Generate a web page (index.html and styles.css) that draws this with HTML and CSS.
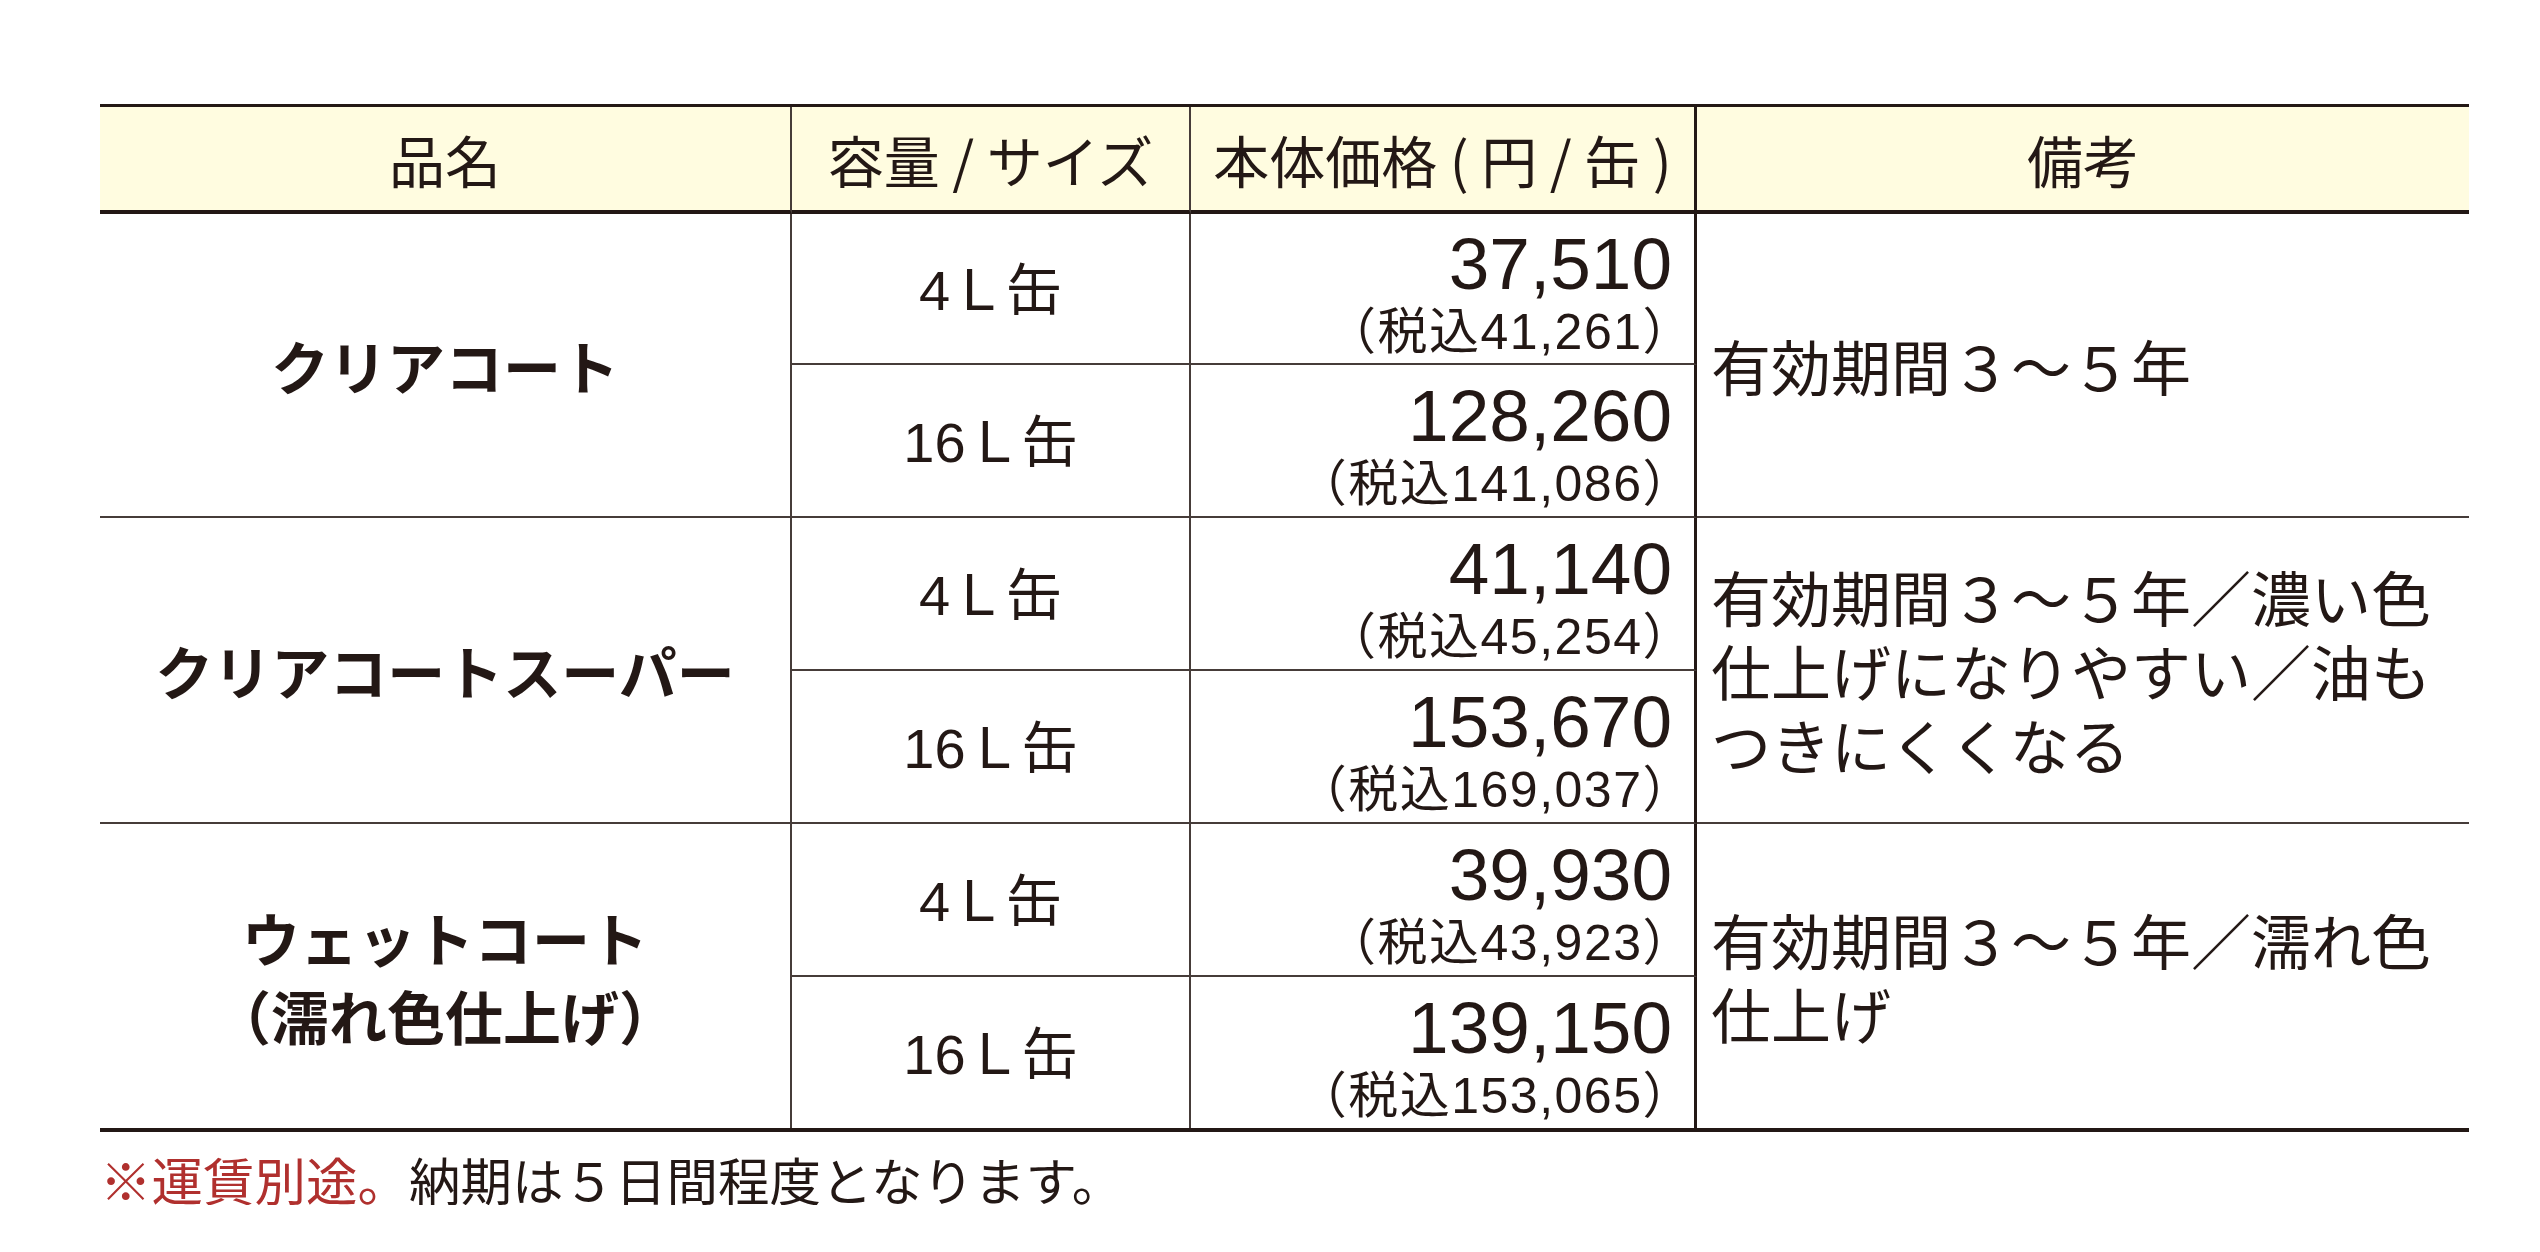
FILE: index.html
```html
<!DOCTYPE html>
<html lang="ja">
<head>
<meta charset="utf-8">
<title>価格表</title>
<link rel="stylesheet" href="styles.css">
</head>
<body>
<div class="page">
  <table class="price-table">
    <colgroup>
      <col class="col-name">
      <col class="col-size">
      <col class="col-price">
      <col class="col-note">
    </colgroup>
    <thead>
      <tr class="head-row">
        <th class="b-thin">品名</th>
        <th class="b-thin">容量 / サイズ</th>
        <th class="b-thick">本体価格 ( 円 / 缶 )</th>
        <th>備考</th>
      </tr>
    </thead>
    <tbody>
      <tr class="row first">
        <td class="name b-thin" rowspan="2">クリアコート</td>
        <td class="size b-thin">4<span class="jp">Ｌ缶</span></td>
        <td class="price b-thick"><div class="num">37,510</div><div class="tax">（税込41,261）</div></td>
        <td class="note" rowspan="2"><div class="line">有効期間３～５年</div></td>
      </tr>
      <tr class="row">
        <td class="size b-thin">16<span class="jp">Ｌ缶</span></td>
        <td class="price b-thick"><div class="num">128,260</div><div class="tax">（税込141,086）</div></td>
      </tr>
      <tr class="row">
        <td class="name b-thin" rowspan="2">クリアコートスーパー</td>
        <td class="size b-thin">4<span class="jp">Ｌ缶</span></td>
        <td class="price b-thick"><div class="num">41,140</div><div class="tax">（税込45,254）</div></td>
        <td class="note" rowspan="2"><div class="line">有効期間３～５年／濃い色</div><div class="line">仕上げになりやすい／油も</div><div class="line">つきにくくなる</div></td>
      </tr>
      <tr class="row">
        <td class="size b-thin">16<span class="jp">Ｌ缶</span></td>
        <td class="price b-thick"><div class="num">153,670</div><div class="tax">（税込169,037）</div></td>
      </tr>
      <tr class="row">
        <td class="name b-thin end" rowspan="2"><div class="line">ウェットコート</div><div class="line">（濡れ色仕上げ）</div></td>
        <td class="size b-thin">4<span class="jp">Ｌ缶</span></td>
        <td class="price b-thick"><div class="num">39,930</div><div class="tax">（税込43,923）</div></td>
        <td class="note end" rowspan="2"><div class="line">有効期間３～５年／濡れ色</div><div class="line">仕上げ</div></td>
      </tr>
      <tr class="row last">
        <td class="size b-thin end">16<span class="jp">Ｌ缶</span></td>
        <td class="price b-thick end"><div class="num">139,150</div><div class="tax">（税込153,065）</div></td>
      </tr>
    </tbody>
  </table>
  <p class="footnote"><span class="red">※運賃別途。</span>納期は５日間程度となります。</p>
</div>
</body>
</html>
```

FILE: styles.css
```css
html, body {
  margin: 0;
  padding: 0;
  background: #ffffff;
}

body {
  color: #231815;
  font-family: "Noto Sans CJK JP", "Noto Sans", sans-serif;
}

.page {
  padding: 104px 0 0 100px;
}

.price-table {
  table-layout: fixed;
  width: 2369px;
  border-collapse: separate;
  border-spacing: 0;
  border-top: 3px solid #231815;
  border-bottom: 4px solid #231815;
}

.col-name { width: 692px; }
.col-size { width: 399px; }
.col-price { width: 506px; }
.col-note { width: 772px; }

.head-row {
  height: 107px;
}

.head-row th {
  background: #fffce0;
  border-bottom: 4px solid #231815;
  font-size: 56px;
  font-weight: 400;
  text-align: center;
  vertical-align: middle;
  padding: 0;
  line-height: 1;
  white-space: nowrap;
}

.b-thin {
  border-right: 2px solid #463c39;
}

.b-thick {
  border-right: 3px solid #231815;
}

.row {
  height: 153px;
}

.row.first {
  height: 151px;
}

.row.last {
  height: 151px;
}

.row td {
  border-bottom: 2px solid #463c39;
  padding: 0;
  vertical-align: middle;
}

.row td.end {
  border-bottom: none;
}

.name {
  text-align: center;
  font-size: 58px;
  font-weight: 700;
  line-height: 78px;
}

.size {
  text-align: center;
  font-family: "Liberation Sans", "Noto Sans CJK JP", sans-serif;
  font-size: 56px;
  line-height: 1;
}

.size .jp {
  font-family: "Noto Sans CJK JP", sans-serif;
}

.row td.price {
  text-align: right;
  padding: 14px 22px 0 0;
  font-family: "Liberation Sans", "Noto Sans CJK JP", sans-serif;
}

.num {
  font-size: 73px;
  line-height: 66px;
}

.tax {
  font-size: 50px;
  line-height: 56px;
  margin-top: 7px;
  margin-right: -22px;
  letter-spacing: 1.5px;
  white-space: nowrap;
}

.row td.note {
  font-size: 60px;
  line-height: 74px;
  padding-left: 14px;
  white-space: nowrap;
}

.footnote {
  margin: 21px 0 0 0;
  font-size: 51.5px;
  line-height: 1;
}

.red {
  color: #b0302e;
}
```
